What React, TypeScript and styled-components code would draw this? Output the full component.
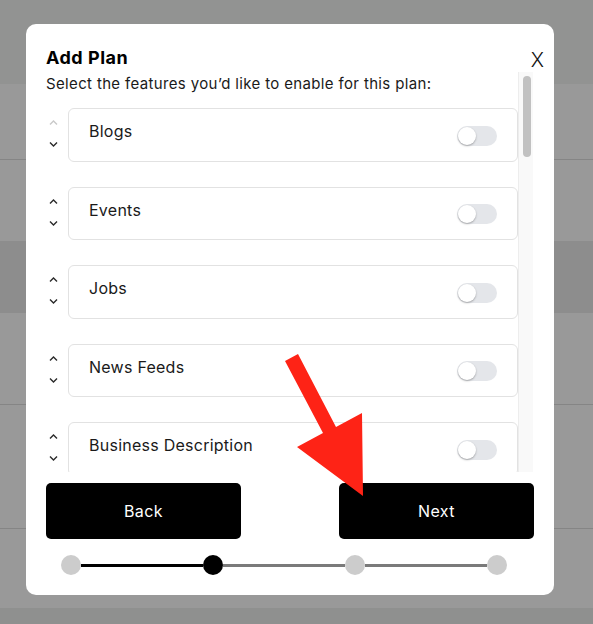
import React from "react";
import styled, { createGlobalStyle } from "styled-components";

const GlobalStyle = createGlobalStyle`
  html, body {
    margin: 0;
    padding: 0;
  }
  body {
    font-family: Inter, "Noto Sans", sans-serif;
    color: #111;
  }
  * {
    box-sizing: border-box;
  }
`;

/* page under the dialog */
const Page = styled.div`
  width: 100vw;
  height: 100vh;
  overflow: hidden;
  background: #fff;
  display: flex;
  flex-direction: column;
`;

const PageBand = styled.div<{ $h: number; $bg?: string; $line?: boolean }>`
  flex: 0 0 ${(p) => p.$h}px;
  background: ${(p) => p.$bg || "#fff"};
  border-bottom: ${(p) => (p.$line ? "1px solid #dedede" : "none")};
`;

const Overlay = styled.div`
  position: fixed;
  inset: 0;
  background: rgba(0, 0, 0, 0.4);
  display: flex;
  align-items: flex-start;
  justify-content: flex-start;
  padding: 24px 0 0 26px;
`;

const Modal = styled.div`
  width: 528px;
  height: 571px;
  background: #fff;
  border-radius: 10px;
  padding: 22px 20px 20px;
  display: flex;
  flex-direction: column;
`;

const Header = styled.div`
  display: flex;
  align-items: center;
  justify-content: space-between;
  height: 24px;
`;

const Title = styled.h2`
  margin: 0;
  font-size: 18px;
  line-height: 24px;
  font-weight: 700;
  letter-spacing: 0.5px;
  color: #000;
`;

const Close = styled.button`
  border: none;
  background: none;
  padding: 0;
  margin: 4px -10px 0 0;
  font-family: Inter, sans-serif;
  font-size: 20px;
  font-weight: 300;
  line-height: 20px;
  color: #111;
  cursor: pointer;
`;

const Body = styled.div`
  margin-top: 2px;
  height: 400px;
  display: flex;
  margin-right: 1px;
`;

const ScrollArea = styled.div`
  flex: 1;
  overflow: hidden;
`;

const Track = styled.div`
  flex: 0 0 15px;
  background: #f9f9f9;
  border-left: 1px solid #ededed;
  padding: 4px 2px 0 4px;
`;

const Thumb = styled.div`
  height: 81px;
  border-radius: 5px;
  background: #c1c1c1;
`;

const Subtitle = styled.p`
  margin: 0 0 12px;
  font-size: 15px;
  line-height: 24px;
  letter-spacing: 0.35px;
  color: #1a1a1a;
`;

const List = styled.div`
  display: flex;
  flex-direction: column;
  gap: 25px;
`;

const Row = styled.div`
  display: flex;
`;

const Arrows = styled.div`
  flex: 0 0 22px;
  display: flex;
  flex-direction: column;
  gap: 17px;
  padding: 12px 0 0 3px;
`;

const Card = styled.div`
  flex: 1;
  height: 53.5px;
  border: 1px solid #e2e2e2;
  border-radius: 6px;
  padding: 0 20px;
  display: flex;
  justify-content: space-between;
`;

const Label = styled.span`
  margin-top: 10px;
  font-size: 16px;
  line-height: 24px;
  letter-spacing: 0.25px;
  color: #1a1a1a;
`;

const Toggle = styled.span`
  align-self: center;
  margin-top: 2px;
  width: 40px;
  height: 20px;
  border-radius: 10px;
  background: #e4e6ea;
  padding: 1px;
  display: flex;
`;

const Knob = styled.span`
  width: 18px;
  height: 18px;
  border-radius: 50%;
  background: #fff;
  box-shadow: 0 1px 2px rgba(0, 0, 0, 0.3);
`;

const Buttons = styled.div`
  margin-top: 11px;
  display: flex;
  justify-content: space-between;
`;

const Button = styled.button`
  width: 195px;
  height: 56px;
  border: none;
  border-radius: 5px;
  background: #000;
  color: #fff;
  font-family: Inter, sans-serif;
  font-size: 16px;
  letter-spacing: 0.4px;
  cursor: pointer;
`;

const Stepper = styled.div`
  margin-top: 16px;
  display: flex;
  align-items: center;
  padding: 0 27px 0 15px;
`;

const Dot = styled.span<{ $active?: boolean }>`
  flex: 0 0 20px;
  height: 20px;
  border-radius: 50%;
  background: ${(p) => (p.$active ? "#000" : "#cccccc")};
`;

const Line = styled.span<{ $done?: boolean }>`
  flex: 1;
  height: 3px;
  background: ${(p) => (p.$done ? "#000" : "#7a7a7a")};
`;

const Annotation = styled.svg`
  position: absolute;
  left: 0;
  top: 0;
  pointer-events: none;
`;

const Chevron = ({ up, disabled }: { up?: boolean; disabled?: boolean }) => (
  <svg width="9" height="5" viewBox="0 0 9 5">
    <polyline
      points={up ? "1,4.5 4.5,1 8,4.5" : "1,0.5 4.5,4 8,0.5"}
      fill="none"
      stroke={disabled ? "#c9c9c9" : "#2a2a2a"}
      strokeWidth="1.4"
    />
  </svg>
);

const features = ["Blogs", "Events", "Jobs", "News Feeds", "Business Description"];

const App = () => {
  return (
    <>
      <GlobalStyle />
      <Page>
        <PageBand $h={84} $bg="#f4f6f4" />
        <PageBand $h={76} $line />
        <PageBand $h={81} />
        <PageBand $h={72} $bg="#ebebeb" />
        <PageBand $h={92} $line />
        <PageBand $h={124} $line />
        <PageBand $h={79} />
        <PageBand $h={20} $bg="#eef0ee" />
      </Page>
      <Overlay>
        <Modal>
          <Header>
            <Title>Add Plan</Title>
            <Close>X</Close>
          </Header>
          <Body>
            <ScrollArea>
              <Subtitle>Select the features you’d like to enable for this plan:</Subtitle>
              <List>
                {features.map((f, i) => (
                  <Row key={f}>
                    <Arrows>
                      <Chevron up disabled={i === 0} />
                      <Chevron />
                    </Arrows>
                    <Card>
                      <Label>{f}</Label>
                      <Toggle>
                        <Knob />
                      </Toggle>
                    </Card>
                  </Row>
                ))}
              </List>
            </ScrollArea>
            <Track>
              <Thumb />
            </Track>
          </Body>
          <Buttons>
            <Button>Back</Button>
            <Button>Next</Button>
          </Buttons>
          <Stepper>
            <Dot />
            <Line $done />
            <Dot $active />
            <Line />
            <Dot />
            <Line />
            <Dot />
          </Stepper>
        </Modal>
        <Annotation width="593" height="624" viewBox="0 0 593 624">
          <polygon
            points="285,361 298,354 336,427 362,413 363,496 297,447 323,433"
            fill="#fe2316"
          />
        </Annotation>
      </Overlay>
    </>
  );
};

export default App;
